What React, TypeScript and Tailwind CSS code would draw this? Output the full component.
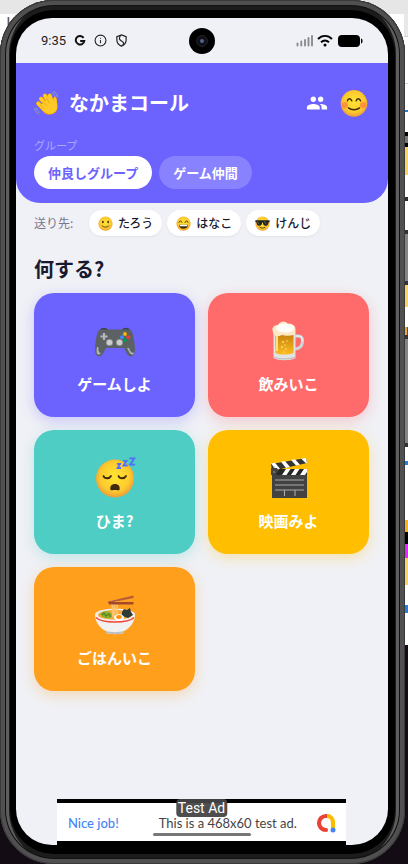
import React, { useState } from 'react';
import { Info } from 'lucide-react';
import { MdPeople } from 'react-icons/md';
import clsx from 'clsx';

type IconProps = { className?: string };

const WaveHand: React.FC<IconProps> = ({ className }) => (
    <svg viewBox="0 0 32 32" className={className} aria-hidden="true">
        <g stroke="#e59600" strokeWidth="5.6" strokeLinecap="round" fill="none">
            <path d="M9 10l8 9M14 6l7 11M20 6l4 11M5.5 16l8 8" />
        </g>
        <path d="M7 20l9-9 9 3c-1-4 0-7 2-7 3 0 2 5 3 10 1 6-1 10-5 12-6 3-11 1-14-3z" fill="#e59600" />
        <g stroke="#ffca28" strokeWidth="4.6" strokeLinecap="round" fill="none">
            <path d="M9 10l8 9M14 6l7 11M20 6l4 11M5.5 16l8 8" />
        </g>
        <path d="M8 19l8-7 9 3c-1-4 0-7 2-7 2 0 2 5 2.500 9 1 6-1 9.500-4.500 11-5 3-10 1-13-3z" fill="#ffca28" />
        <path d="M11 13l5 6M16 9l4 7M8 18l5 5" stroke="#e59600" strokeWidth=".8" fill="none" />
        <path d="M25 1c3 1 5 3 5 6M23 3c2 1 4 2 4 4M1 22c0 4 2 6 5 7M3.500 22c0 2 1 4 3 5" stroke="#90a4ae" strokeWidth="1.200" strokeLinecap="round" fill="none" />
    </svg>
);

type FaceKind = 'blush' | 'smile' | 'grin' | 'cool' | 'sleepy';

const Face: React.FC<IconProps & { kind: FaceKind }> = ({ className, kind }) => (
    <svg viewBox="0 0 40 40" className={className} aria-hidden="true">
        <defs>
            <radialGradient id={`face-${kind}`} cx="50%" cy="45%" r="55%">
                <stop offset="0" stopColor="#fee433" />
                <stop offset=".7" stopColor="#fdcb2e" />
                <stop offset="1" stopColor="#ee9c35" />
            </radialGradient>
        </defs>
        <circle cx="20" cy="20.500" r="19" fill={`url(#face-${kind})`} />
        {kind === 'blush' && (
            <>
                <circle cx="7" cy="23" r="4.500" fill="#ff7043" opacity=".6" />
                <circle cx="33" cy="23" r="4.500" fill="#ff7043" opacity=".6" />
                <path d="M10.500 17c1-4 5-4 6.500 0M23 17c1-4 5-4 6.500 0M12 27c4 3.500 12 3.500 16 0" stroke="#422b0d" strokeWidth="2" strokeLinecap="round" fill="none" />
            </>
        )}
        {kind === 'smile' && (
            <>
                <ellipse cx="13" cy="16" rx="2.300" ry="3.200" fill="#422b0d" />
                <ellipse cx="27" cy="16" rx="2.300" ry="3.200" fill="#422b0d" />
                <path d="M11 26c5 5 13 5 18 0" stroke="#422b0d" strokeWidth="2.200" strokeLinecap="round" fill="none" />
            </>
        )}
        {kind === 'grin' && (
            <>
                <path d="M8 17c1-5 7-5 8 0M24 17c1-5 7-5 8 0" stroke="#422b0d" strokeWidth="2.400" strokeLinecap="round" fill="none" />
                <path d="M8 23h24c0 7-5 11-12 11S8 30 8 23z" fill="#422b0d" />
                <path d="M10 23h20v4H10z" fill="#fff" />
            </>
        )}
        {kind === 'cool' && (
            <>
                <path d="M1 11h38v5l-3 1c-1 7-4 9-8 9-5 0-7-5-7-9h-2c0 4-2 9-7 9-4 0-7-2-8-9l-3-1z" fill="#222" />
                <path d="M6 14l5 8M25 14l5 8" stroke="#777" strokeWidth="2" />
                <path d="M13 30c4 3 10 3 14 0" stroke="#422b0d" strokeWidth="2.200" strokeLinecap="round" fill="none" />
            </>
        )}
        {kind === 'sleepy' && (
            <>
                <path d="M8.500 18c1 3 6 3 7.500 0M23.500 18c1 3 6 3 7.500 0" stroke="#422b0d" strokeWidth="1.800" strokeLinecap="round" fill="none" />
                <path d="M15.500 32c-1-4 1.500-6 4.500-6s5.500 2 4.500 6c-1 .8-2 0-4.500 0s-3.500.8-4.500 0z" fill="#422b0d" />
            </>
        )}
    </svg>
);

const Sleeping: React.FC<IconProps> = ({ className }) => (
    <div className={clsx('relative', className)}>
        <Face kind="sleepy" className="h-10 w-10" />
        <svg viewBox="0 0 24 14" className="absolute -top-px -right-px h-3 w-5" aria-hidden="true">
            <path d="M1 8h4l-3 5h4M8.500 4.500h4l-3.500 5.500h5M16 1.500h6l-5 7.500h6" stroke="#536dfe" strokeWidth="2.200" fill="none" />
        </svg>
    </div>
);

const Gamepad: React.FC<IconProps> = ({ className }) => (
    <svg viewBox="0 0 40 40" className={className} aria-hidden="true">
        <path d="M5 9c1-3 7-3 8 0zM27 9c1-3 7-3 8 0z" fill="#37474f" />
        <path d="M6 8.500h28c3 0 4 4 5 10 1 8 2 14-1.500 16.500-4 2-6-3-8.500-8h-18c-2.500 5-4.500 10-8.500 8C-1 32.500 0 26 1 19 2 12.500 3 8.500 6 8.500z" fill="#5c6163" />
        <path d="M2 26c-1 6 0 9 3 7l1-1c-2 0-3-2-2.500-6zM32 27l3 5.500c2 2 4 1 4-1-2 1-4-1-5-4.500z" fill="#b0b5b7" />
        <path d="M9 12v7M5.500 15.500h7" stroke="#b4b8ba" strokeWidth="2.200" />
        <circle cx="14.500" cy="21.500" r="3.300" fill="#cdcdcd" stroke="#757575" strokeWidth=".6" />
        <circle cx="24.500" cy="21.500" r="3.300" fill="#cdcdcd" stroke="#757575" strokeWidth=".6" />
        <circle cx="30" cy="13" r="1.900" fill="#fcb900" />
        <circle cx="33.300" cy="16.200" r="1.900" fill="#f23b2e" />
        <circle cx="27" cy="16.200" r="1.900" fill="#448aff" />
        <circle cx="30" cy="19" r="1.900" fill="#009b54" />
    </svg>
);

const Beer: React.FC<IconProps> = ({ className }) => (
    <svg viewBox="0 0 40 40" className={className} aria-hidden="true">
        <defs>
            <linearGradient id="beer" x2="0" y2="1">
                <stop stopColor="#c47f0c" />
                <stop offset="1" stopColor="#fcbc20" />
            </linearGradient>
        </defs>
        <path d="M26 15h3.500c3 0 4.500 2 4 6s-3 7-8 7" fill="none" stroke="#cfd4d8" strokeWidth="3" />
        <path d="M27 15h2c3 0 4.500 2 4 5" fill="none" stroke="#f5f5f5" strokeWidth="1.200" />
        <path d="M4.500 10h22v27c-5 3-17 3-22 0z" fill="#e2e2e2" />
        <path d="M6.500 12h18v20c-5 2-13 2-18 0z" fill="url(#beer)" />
        <path d="M7 13h2v17H7z" fill="#ffe082" />
        <path d="M4.500 36c5 2.500 17 2.500 22 0" stroke="#b8b8b8" fill="none" />
        <path d="M4 11C2 7 5 4 9 4c2-4 7-5 10-1 5-1 9 3 7 8l-1 3c-4 1-9 1-12 0-2 1-3 1-5 1-2 0-4-1-4-4z" fill="#ffe9c4" />
        <ellipse cx="16" cy="7" rx="9" ry="4.500" fill="#fffdf8" />
        <g fill="#ffe57f">
            <circle cx="14" cy="21" r=".9" /><circle cx="18" cy="20" r=".7" /><circle cx="13" cy="26" r=".9" />
            <circle cx="17" cy="28" r=".8" /><circle cx="15" cy="31" r=".7" /><circle cx="16" cy="24" r=".7" />
        </g>
    </svg>
);

const Clapper: React.FC<IconProps> = ({ className }) => (
    <svg viewBox="0 0 40 40" className={className} aria-hidden="true">
        <path d="M2 6L37 0l1 5L3 13z" fill="#353535" />
        <path d="M2 5.500l4-.7 5 6-4 1zM12 3.800l4-.7 5 6-4 .8zM22 2l4-.7 5 5.500-4 .8zM32 .5l5-.5 1 5-1 .3z" fill="#fff" />
        <path d="M2 10h6l4 7H2z" fill="#424242" />
        <path d="M3 17h35v23H3z" fill="#424242" />
        <path d="M10 11h28v6H7z" fill="#262626" />
        <path d="M17 11h4.500l-4 6H13zM26 11h4.500l-4 6H22zM35 11h3v3l-2 3h-5z" fill="#fff" />
        <path d="M6 22h29M6 27h29M6 32h29M15.500 32v6M26 32v6" stroke="#aaa" strokeWidth="1.100" />
        <circle cx="5" cy="9" r=".8" fill="#aaa" />
        <circle cx="5" cy="14" r=".8" fill="#aaa" />
    </svg>
);

const Ramen: React.FC<IconProps> = ({ className }) => (
    <svg viewBox="0 0 40 40" className={className} aria-hidden="true">
        <ellipse cx="20" cy="19.500" rx="20" ry="6" fill="#eceff1" />
        <ellipse cx="20" cy="20" rx="17" ry="5" fill="#f9a93c" />
        <path d="M5 19c4-4 9-3 12 0l-1 4c-5 1-9 0-11-4z" fill="#8fae2e" />
        <path d="M7 20l2-2 2 3 3-2 2 3" stroke="#4f8a25" strokeWidth="1.300" fill="none" />
        <path d="M17 5l1 17M19.500 5v17M22 4v17" stroke="#ffc46b" strokeWidth="1.700" />
        <path d="M13 6.500L38.500.5v2.500L13.500 8z" fill="#b85c38" />
        <path d="M13 7h25.500v2.500H14z" fill="#a24b2b" />
        <path d="M27 17l2-3 3 1 3-2 1 4 2 3-5 3-6-2z" fill="#2f3b38" />
        <path d="M0 19.500c5 7 35 7 40 0 0 8-6 14.500-11 16.500v2c-5 1.500-13 1.500-18 0v-2C6 34 0 27.500 0 19.500z" fill="#f1f1f1" />
        <path d="M1 22.500c6 6 32 6 38 0" stroke="#f44336" strokeWidth="1.400" fill="none" />
        <path d="M11 36c5 1.500 13 1.500 18 0v2c-5 1.500-13 1.500-18 0z" fill="#bdbdbd" />
        <ellipse cx="24" cy="22.500" rx="5" ry="3.300" fill="#fff" />
        <ellipse cx="24" cy="22" rx="2.800" ry="1.900" fill="#ff8f00" />
    </svg>
);

const GoogleG: React.FC<IconProps> = ({ className }) => (
    <svg viewBox="0 0 14 14" className={className} aria-hidden="true">
        <path d="M11.200 3.300A5 5 0 1 0 12 7H7.200" fill="none" stroke="#111" strokeWidth="2.300" />
    </svg>
);

const ShieldIcon: React.FC<IconProps> = ({ className }) => (
    <svg viewBox="0 0 14 14" className={className} aria-hidden="true">
        <path d="M7 1l5 1.800v3.600c0 3-2 5.300-5 6.600-3-1.300-5-3.600-5-6.600V2.800z" fill="none" stroke="#222" strokeWidth="1.300" />
        <path d="M6 1.500C3.500 5 5 6.500 7 7.500s3 2.500 1.500 4.500" fill="none" stroke="#222" strokeWidth="1.300" />
    </svg>
);

const SignalIcons = () => (
    <div className="flex items-center gap-1">
        <svg viewBox="0 0 17 13" className="h-[13px] w-[17px]" aria-hidden="true">
            <path d="M1.500 9.500v2M5.300 7.500v4M9 6v5.500M12.500 4v7.500M16 2v9.500" stroke="#8b8b8d" strokeWidth="1.900" strokeLinecap="round" />
        </svg>
        <svg viewBox="0 0 16 13" className="h-[13px] w-4" aria-hidden="true">
            <path d="M1 5c4-4.200 10-4.200 14 0M4 8.300c2.400-2.300 5.600-2.300 8 0" fill="none" stroke="#000" strokeWidth="1.900" />
            <circle cx="8" cy="11" r="1.500" />
        </svg>
        <svg viewBox="0 0 25 12" className="ml-px h-3 w-[25px]" aria-hidden="true">
            <rect width="22" height="12" rx="4" />
            <path d="M23 3.500c2 0 2 5 0 5z" />
        </svg>
    </div>
);

const AdMobLogo: React.FC<IconProps> = ({ className }) => (
    <svg viewBox="0 0 20 20" className={className} aria-hidden="true">
        <path d="M11 3c4 0 6 3 6 7v6" fill="none" stroke="#fbbc04" strokeWidth="4.200" />
        <path d="M10 17a7 7 0 0 1 0-14h1" fill="none" stroke="#ea4335" strokeWidth="4.200" strokeLinecap="round" />
        <path d="M11 .9c2 0 3 .6 4 1.200l-2 3.500-2-.5z" fill="#fbbc04" />
        <circle cx="17" cy="17" r="2.500" fill="#4285f4" />
    </svg>
);

const groups = ['仲良しグループ', 'ゲーム仲間'];

const members: { name: string; face: FaceKind }[] = [
    { name: 'たろう', face: 'smile' },
    { name: 'はなこ', face: 'grin' },
    { name: 'けんじ', face: 'cool' },
];

const actions = [
    { label: 'ゲームしよ', Icon: Gamepad, style: 'bg-[#6c63ff] shadow-[#6c63ff]/30' },
    { label: '飲みいこ', Icon: Beer, style: 'bg-[#ff6b6b] shadow-[#ff6b6b]/30' },
    { label: 'ひま?', Icon: Sleeping, style: 'bg-[#4ecdc4] shadow-[#4ecdc4]/30' },
    { label: '映画みよ', Icon: Clapper, style: 'bg-[#ffbe00] shadow-[#ffbe00]/30' },
    { label: 'ごはんいこ', Icon: Ramen, style: 'bg-[#ff9f1c] shadow-[#ff9f1c]/30' },
];

// Window peeking out from behind the emulator
const Backdrop = () => (
    <div className="absolute inset-0 flex flex-col bg-white" aria-hidden="true">
        <div className="h-[14px] bg-[#e6e6e6]" />
        <div className="flex grow">
            <span className="pl-[6px] text-base leading-4 text-[#555]">K</span>
            <div className="ml-auto flex w-1 flex-col">
                <div className="h-[22px] bg-[#e8e8e8]" />
                <div className="h-12 border-y border-gray-300" />
                <div className="h-[26px]" />
                <div className="h-[2px] bg-[#2684d8]" />
                <div className="h-5" />
                <div className="h-[15px] border-y-4 border-black bg-[#777]" />
                <div className="h-7 bg-[#fbd267]" />
                <div className="h-[22px]" />
                <div className="h-1 bg-[#333]" />
                <div className="h-[29px]" />
                <div className="h-[55px] border-y-4 border-[#333] bg-[#858585]" />
                <div className="h-[22px] bg-[#fbd267]" />
                <div className="h-5" />
                <div className="h-2 border-r border-[#215cb0] bg-[#f5a531]" />
                <div className="h-[112px] border-y-4 border-[#333] bg-[#858585]" />
                <div className="h-[14px]" />
                <div className="h-1 bg-[#2684d8]" />
                <div className="h-[55px]" />
                <div className="h-3 bg-[#f4b322]" />
                <div className="h-3 bg-black" />
                <div className="h-[14px] bg-fuchsia-500" />
                <div className="h-[27px] bg-[#fbd267]" />
                <div className="h-5" />
                <div className="h-2 bg-[#2684d8]" />
            </div>
        </div>
        <div className="h-[219px] bg-[#140c14]" />
    </div>
);

export default function App() {
    const [activeGroup, setActiveGroup] = useState(groups[0]);

    return (
        <div className="relative flex min-h-screen flex-col font-['Noto_Sans_CJK_JP',sans-serif]">
            <Backdrop />
            <div className="relative mr-[3px] flex grow flex-col rounded-[54px] bg-black pt-[18px] pr-[17px] pb-[19px] pl-4 shadow-[inset_0_0_0_1px_#3a3a3a,inset_0_0_0_5px_#505050,inset_0_0_0_6px_#111,inset_9px_0_0_0_#5e5e5e,inset_-9px_0_0_0_#5e5e5e,inset_0_0_0_10px_#1c1c1c]">
                <div className="flex grow flex-col overflow-hidden rounded-[36px] bg-[#f0f1f6]">
                    <div className="grid h-[45px] grid-cols-[1fr_auto_1fr] items-center px-[25px]">
                        <div className="flex items-center gap-2">
                            <span className="font-[Roboto,sans-serif] text-[13px] text-[#222]">9:35</span>
                            <GoogleG className="h-3 w-3" />
                            <Info className="h-[13px] w-[13px] text-[#222]" />
                            <ShieldIcon className="h-[13px] w-[13px]" />
                        </div>
                        <div className="flex h-[26px] w-[26px] items-center justify-center rounded-full bg-black">
                            <div className="flex h-3 w-3 items-center justify-center rounded-full border border-[#222] bg-[#101018]">
                                <div className="h-1 w-1 rounded-full bg-[#53658b]" />
                            </div>
                        </div>
                        <div className="flex justify-end">
                            <SignalIcons />
                        </div>
                    </div>

                    <header className="rounded-b-3xl bg-[#6c63ff] pt-[25px] pr-5 pb-[14px] pl-[18px]">
                        <div className="flex h-[30px] items-center justify-between">
                            <h1 className="flex items-center gap-[10px] text-xl leading-7 font-bold text-white">
                                <WaveHand className="h-[25px] w-[25px]" />
                                なかまコール
                            </h1>
                            <div className="flex items-center gap-3">
                                <button type="button" aria-label="メンバー" className="text-white">
                                    <MdPeople className="h-[22px] w-[22px]" />
                                </button>
                                <button type="button" aria-label="プロフィール">
                                    <Face kind="blush" className="h-7 w-7" />
                                </button>
                            </div>
                        </div>
                        <p className="mt-[19px] mb-[3px] text-[11px] leading-4 text-white/45">グループ</p>
                        <div className="flex gap-[7px]">
                            {groups.map(group => (
                                <button
                                    key={group}
                                    type="button"
                                    onClick={() => setActiveGroup(group)}
                                    className={clsx(
                                        'h-[33px] rounded-full px-[14px] text-[13px] font-bold',
                                        group === activeGroup ? 'bg-white text-[#6c63ff]' : 'bg-white/20 text-white'
                                    )}
                                >
                                    {group}
                                </button>
                            ))}
                        </div>
                    </header>

                    <main className="grow pt-[7px] pr-[19px] pl-[18px]">
                        <div className="flex items-center gap-[5px]">
                            <span className="w-[50px] text-xs text-[#77778c]">送り先:</span>
                            {members.map(({ name, face }) => (
                                <div key={name} className="flex h-[26px] items-center gap-[5px] rounded-full bg-white px-[9px] text-xs font-medium text-[#1a1a2e] shadow-sm shadow-black/5">
                                    <Face kind={face} className="h-[15px] w-[15px]" />
                                    {name}
                                </div>
                            ))}
                        </div>
                        <h2 className="mt-[19px] mb-[10px] text-xl leading-7 font-bold text-[#1a1a2e]">何する?</h2>
                        <div className="grid grid-cols-2 gap-[13px]">
                            {actions.map(({ label, Icon, style }) => (
                                <button
                                    key={label}
                                    type="button"
                                    className={clsx('flex h-[124px] flex-col items-center rounded-[20px] pt-7 shadow-[0_4px_14px]', style)}
                                >
                                    <Icon className="h-10 w-10" />
                                    <span className="mt-3 text-[15px] leading-[22px] font-bold text-white">{label}</span>
                                </button>
                            ))}
                        </div>
                    </main>

                    <div className="relative mr-[42px] ml-[41px] border-y-4 border-black">
                        <a href="#ad" className="flex h-[38px] items-center bg-white pt-[2px] pr-[10px] pl-[11px] font-[Lato,sans-serif] text-[13px] leading-[14px] text-[#444]">
                            <span className="font-medium text-[#4285f4]">Nice job!</span>
                            <span className="mr-auto ml-10">This is a 468x60 test ad.</span>
                            <AdMobLogo className="h-5 w-5" />
                        </a>
                        <span className="absolute -top-1 left-1/2 -translate-x-1/2 rounded-sm bg-[#444]/95 px-[2px] font-[Roboto,sans-serif] text-sm leading-[18px] whitespace-nowrap text-white">Test Ad</span>
                        <div className="absolute bottom-[5px] left-1/2 h-[3px] w-[98px] -translate-x-1/2 rounded-full bg-[#777]" />
                    </div>
                </div>
            </div>
        </div>
    );
}
